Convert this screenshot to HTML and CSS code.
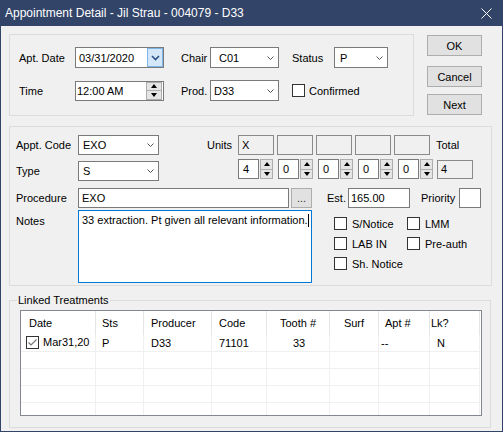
FILE: index.html
```html
<!DOCTYPE html>
<html lang="en">
<head>
    <meta charset="UTF-8">
    <title>Appointment Detail</title>
    <link rel="stylesheet" href="styles.css">
</head>
<body>
    <div class="window">
        <div class="titlebar">
            <span class="title">Appointment Detail - Jil Strau - 004079 - D33</span>
            <svg class="close" width="11" height="11" viewBox="0 0 11 11">
                <path d="M0.5 0.5 L10.5 10.5 M10.5 0.5 L0.5 10.5" stroke="#fff" stroke-width="1"/>
            </svg>
        </div>

        <div class="client">
            <div class="top">
                <div class="group appt-group">
                    <span class="lbl">Apt. Date</span>
                    <div class="field date">
                        <span class="val">03/31/2020</span>
                        <span class="drop-btn">
                            <svg width="9" height="6" viewBox="0 0 9 6"><path d="M1 1 L4.5 4.5 L8 1" fill="none" stroke="#2c4f86" stroke-width="1.6"/></svg>
                        </span>
                    </div>
                    <span class="lbl">Chair</span>
                    <div class="combo chair"><span>C01</span><svg class="chev" width="7" height="4" viewBox="0 0 7 4"><path d="M0.5 0.5 L3.5 3.5 L6.5 0.5" fill="none" stroke="#555"/></svg></div>
                    <span class="lbl">Status</span>
                    <div class="combo status"><span>P</span><svg class="chev" width="7" height="4" viewBox="0 0 7 4"><path d="M0.5 0.5 L3.5 3.5 L6.5 0.5" fill="none" stroke="#555"/></svg></div>

                    <span class="lbl">Time</span>
                    <div class="field time">
                        <span class="val">12:00 AM</span>
                        <span class="spin wide"><span class="up"></span><span class="down"></span></span>
                    </div>
                    <span class="lbl">Prod.</span>
                    <div class="combo prod"><span>D33</span><svg class="chev" width="7" height="4" viewBox="0 0 7 4"><path d="M0.5 0.5 L3.5 3.5 L6.5 0.5" fill="none" stroke="#555"/></svg></div>
                    <label class="check confirmed"><span class="box"></span>Confirmed</label>
                </div>

                <div class="buttons">
                    <button class="btn">OK</button>
                    <button class="btn cancel">Cancel</button>
                    <button class="btn next">Next</button>
                </div>
            </div>

            <div class="group detail-group">
                <div class="row row-a">
                    <span class="lbl name">Appt. Code</span>
                    <div class="combo code"><span>EXO</span><svg class="chev" width="7" height="4" viewBox="0 0 7 4"><path d="M0.5 0.5 L3.5 3.5 L6.5 0.5" fill="none" stroke="#555"/></svg></div>
                    <span class="lbl units-lbl">Units</span>
                    <div class="units">
                        <span class="unit-box">X</span>
                        <span class="unit-box"></span>
                        <span class="unit-box"></span>
                        <span class="unit-box"></span>
                        <span class="unit-box"></span>
                    </div>
                    <span class="lbl total-lbl">Total</span>
                </div>

                <div class="row row-b">
                    <span class="lbl name type-lbl">Type</span>
                    <div class="combo code type"><span>S</span><svg class="chev" width="7" height="4" viewBox="0 0 7 4"><path d="M0.5 0.5 L3.5 3.5 L6.5 0.5" fill="none" stroke="#555"/></svg></div>
                    <div class="units spins">
                        <div class="unit-spin"><span class="num">4</span><span class="spin"><span class="up"></span><span class="down"></span></span></div>
                        <div class="unit-spin"><span class="num">0</span><span class="spin"><span class="up"></span><span class="down"></span></span></div>
                        <div class="unit-spin"><span class="num">0</span><span class="spin"><span class="up"></span><span class="down"></span></span></div>
                        <div class="unit-spin"><span class="num">0</span><span class="spin"><span class="up"></span><span class="down"></span></span></div>
                        <div class="unit-spin"><span class="num">0</span><span class="spin"><span class="up"></span><span class="down"></span></span></div>
                    </div>
                    <span class="unit-box total">4</span>
                </div>

                <div class="row row-c">
                    <span class="lbl name">Procedure</span>
                    <span class="input procedure">EXO</span>
                    <button class="dots">...</button>
                    <span class="lbl est-lbl">Est.</span>
                    <span class="input est">165.00</span>
                    <span class="lbl priority-lbl">Priority</span>
                    <span class="input priority"></span>
                </div>

                <div class="row row-d">
                    <span class="lbl name notes-lbl">Notes</span>
                    <div class="notes">33 extraction. Pt given all relevant information.<span class="caret"></span></div>
                    <div class="flags">
                        <label class="check"><span class="box"></span>S/Notice</label>
                        <label class="check"><span class="box"></span>LMM</label>
                        <label class="check"><span class="box"></span>LAB IN</label>
                        <label class="check"><span class="box"></span>Pre-auth</label>
                        <label class="check"><span class="box"></span>Sh. Notice</label>
                    </div>
                </div>
            </div>

            <fieldset class="linked">
                <legend>Linked Treatments</legend>
                <div class="listview">
                    <table>
                        <colgroup>
                            <col style="width:75px"><col style="width:48px"><col style="width:68px"><col style="width:55px">
                            <col style="width:63px"><col style="width:49px"><col style="width:51px"><col style="width:50px">
                        </colgroup>
                        <thead>
                            <tr>
                                <th class="c-date">Date</th>
                                <th>Sts</th>
                                <th>Producer</th>
                                <th>Code</th>
                                <th class="center">Tooth #</th>
                                <th class="center">Surf</th>
                                <th>Apt #</th>
                                <th class="c-lk">Lk?</th>
                            </tr>
                        </thead>
                        <tbody>
                            <tr>
                                <td class="c-date">
                                    <span class="row-check">
                                        <svg width="13" height="13" viewBox="0 0 13 13">
                                            <rect x="0.5" y="0.5" width="12" height="12" fill="#fff" stroke="#333"/>
                                            <path d="M2.5 6.5 L5 9 L10.5 3.5" fill="none" stroke="#777" stroke-width="1.2"/>
                                        </svg>
                                    </span>Mar31,20
                                </td>
                                <td>P</td>
                                <td>D33</td>
                                <td>71101</td>
                                <td class="center tooth">33</td>
                                <td></td>
                                <td class="c-apt">--</td>
                                <td class="c-n">N</td>
                            </tr>
                            <tr><td></td><td></td><td></td><td></td><td></td><td></td><td></td><td></td></tr>
                            <tr><td></td><td></td><td></td><td></td><td></td><td></td><td></td><td></td></tr>
                            <tr><td></td><td></td><td></td><td></td><td></td><td></td><td></td><td></td></tr>
                            <tr><td></td><td></td><td></td><td></td><td></td><td></td><td></td><td></td></tr>
                        </tbody>
                    </table>
                </div>
            </fieldset>
        </div>
    </div>
</body>
</html>
```

FILE: styles.css
```css
body {
    margin: 0;
    font-family: "Liberation Sans", Arial, sans-serif;
    font-size: 11px;
    color: #000;
}
.window {
    width: 503px;
    height: 432px;
    box-sizing: border-box;
    background: #324468;
    padding: 0 1px 1px 1px;
    display: flex;
    flex-direction: column;
}
.titlebar {
    height: 26px;
    display: flex;
    align-items: center;
    justify-content: space-between;
    color: #fff;
    font-size: 12px;
    padding-left: 4px;
}
.close {
    margin-right: 10px;
}
.client {
    flex: 1;
    background: #f0f0f0;
    padding: 8px 0 0 8px;
}
.group {
    border: 1px solid #dcdcdc;
    box-sizing: border-box;
}
.lbl {
    white-space: nowrap;
}

/* top part */
.top {
    display: flex;
    align-items: flex-start;
}
.appt-group {
    width: 405px;
    height: 82px;
    padding: 12px 0 0 9px;
    display: grid;
    grid-template-columns: 56px 106px 29px 82px 42px auto;
    grid-template-rows: 21px 21px;
    row-gap: 12px;
    align-items: center;
}
.field {
    display: flex;
    align-items: center;
    justify-content: space-between;
    box-sizing: border-box;
    border: 1px solid #7a7a7a;
    background: #fff;
}
.date {
    width: 89px;
    height: 21px;
    padding-left: 3px;
}
.drop-btn {
    width: 16px;
    height: 19px;
    box-sizing: border-box;
    border: 1px solid #7eb4ea;
    background: #d4e7f8;
    display: flex;
    align-items: center;
    justify-content: center;
}
.time {
    width: 89px;
    height: 20px;
    padding-left: 1px;
}
.spin {
    width: 13px;
    height: 18px;
    display: flex;
    flex-direction: column;
    box-sizing: border-box;
    border: 1px solid #adadad;
    background: #e5e5e5;
}
.spin.wide {
    width: 16px;
    margin-right: 1px;
}
.spin .up,
.spin .down {
    flex: 1;
    display: flex;
    align-items: center;
    justify-content: center;
}
.spin .up {
    border-bottom: 1px solid #adadad;
}
.spin .up::after {
    content: "";
    border-left: 3.5px solid transparent;
    border-right: 3.5px solid transparent;
    border-bottom: 4px solid #000;
}
.spin .down::after {
    content: "";
    border-left: 3.5px solid transparent;
    border-right: 3.5px solid transparent;
    border-top: 4px solid #000;
}
.combo {
    display: flex;
    align-items: center;
    justify-content: space-between;
    box-sizing: border-box;
    height: 21px;
    border: 1px solid #7a7a7a;
    background: #fff;
    padding: 0 4px 0 4px;
}
.chair {
    width: 69px;
    padding-left: 8px;
}
.status {
    width: 54px;
    padding-left: 5px;
}
.prod {
    width: 69px;
    padding-left: 3px;
}
.check {
    display: flex;
    align-items: center;
    gap: 4px;
    white-space: nowrap;
}
.check .box {
    width: 13px;
    height: 13px;
    box-sizing: border-box;
    border: 1px solid #333;
    background: #fff;
}
.confirmed {
    grid-column: 5 / span 2;
}
.buttons {
    display: flex;
    flex-direction: column;
    margin: 1px 0 0 13px;
}
.btn {
    width: 55px;
    height: 21px;
    margin: 0;
    padding: 0;
    border: 1px solid #adadad;
    background: #e1e1e1;
    font-family: inherit;
    font-size: 11px;
    color: #000;
}
.btn.cancel {
    margin-top: 10px;
}
.btn.next {
    margin-top: 7px;
}

/* detail part */
.detail-group {
    width: 483px;
    height: 160px;
    margin-top: 10px;
    padding: 8px 0 0 6px;
}
.row {
    display: flex;
    align-items: center;
}
.name {
    width: 62px;
}
.combo.code {
    width: 81px;
    height: 20px;
    padding-left: 4px;
}
.units-lbl {
    width: 79px;
    text-align: right;
    padding-right: 6px;
    box-sizing: border-box;
}
.units {
    display: flex;
    gap: 3px;
}
.unit-box {
    width: 36px;
    height: 20px;
    box-sizing: border-box;
    border: 1px solid #8a8a8a;
    background: #f0f0f0;
    padding-left: 3px;
    display: flex;
    align-items: center;
}
.total-lbl {
    margin-left: 6px;
}
.row-b {
    margin-top: 4px;
}
.row-b .type-lbl,
.row-b .type {
    margin-top: 2px;
    margin-bottom: -2px;
}
.spins {
    margin-left: 79px;
    gap: 5px;
}
.unit-spin {
    display: flex;
    gap: 1px;
}
.unit-spin .num {
    width: 21px;
    height: 20px;
    box-sizing: border-box;
    border: 1px solid #7a7a7a;
    background: #fff;
    padding-left: 4px;
    display: flex;
    align-items: center;
}
.unit-spin .spin {
    height: 20px;
}
.unit-box.total {
    margin-left: 4px;
    height: 19px;
}
.row-c {
    margin-top: 9px;
}
.input {
    height: 20px;
    box-sizing: border-box;
    border: 1px solid #7a7a7a;
    background: #fff;
    padding-left: 3px;
    display: flex;
    align-items: center;
}
.procedure {
    width: 211px;
}
.dots {
    width: 21px;
    height: 20px;
    margin: 0 0 0 2px;
    padding: 0 0 3px 0;
    border: 1px solid #adadad;
    background: #e1e1e1;
    font-family: inherit;
    font-size: 11px;
    color: #333;
    display: flex;
    align-items: flex-end;
    justify-content: center;
}
.est-lbl {
    margin-left: 15px;
    width: 21px;
}
.est {
    width: 62px;
    padding-left: 2px;
}
.priority-lbl {
    margin-left: 11px;
    width: 38px;
}
.priority {
    width: 22px;
}
.row-d {
    margin-top: 2px;
    align-items: flex-start;
}
.notes-lbl {
    padding-top: 5px;
}
.notes {
    width: 234px;
    height: 73px;
    box-sizing: border-box;
    border: 1px solid #0078d7;
    background: #fff;
    padding: 3px 0 0 3px;
}
.caret {
    display: inline-block;
    width: 1px;
    height: 13px;
    background: #000;
    vertical-align: -3px;
}
.flags {
    margin: 7px 0 0 22px;
    display: grid;
    grid-template-columns: 73px auto;
    grid-auto-rows: 13px;
    row-gap: 7px;
}
.flags .check {
    gap: 5px;
}

/* linked treatments */
.linked {
    width: 482px;
    height: 134px;
    box-sizing: border-box;
    margin: 8px 0 0 0;
    padding: 3px 0 0 10px;
    border: 1px solid #dcdcdc;
    min-width: 0;
}
.linked legend {
    padding: 0 1px;
    margin-left: -3px;
    line-height: 13px;
}
.listview {
    width: 462px;
    height: 106px;
    box-sizing: border-box;
    border: 1px solid #828790;
    background: #fff;
    overflow: hidden;
}
table {
    table-layout: fixed;
    width: 459px;
    border-collapse: separate;
    border-spacing: 0;
}
th {
    height: 24px;
    padding: 0 0 0 6px;
    font-weight: normal;
    text-align: left;
    border-right: 1px solid #e5e5e5;
    box-sizing: border-box;
}
td {
    height: 17px;
    padding: 0 0 0 6px;
    border-right: 1px solid #f0f0f0;
    border-bottom: 1px solid #f0f0f0;
    box-sizing: border-box;
    white-space: nowrap;
}
th:nth-child(3), td:nth-child(3),
th:nth-child(4), td:nth-child(4) {
    padding-left: 7px;
}
th.c-date {
    padding-left: 8px;
}
td.c-date {
    padding-left: 5px;
}
.row-check {
    display: inline-block;
    vertical-align: -3px;
    margin-right: 4px;
}
.center,
th.center {
    text-align: center;
    padding-left: 0;
}
td.tooth {
    padding-left: 2px;
}
td.c-apt {
    padding-left: 2px;
}
th.c-lk {
    padding-left: 1px;
}
td.c-n {
    padding-left: 7px;
}
```
